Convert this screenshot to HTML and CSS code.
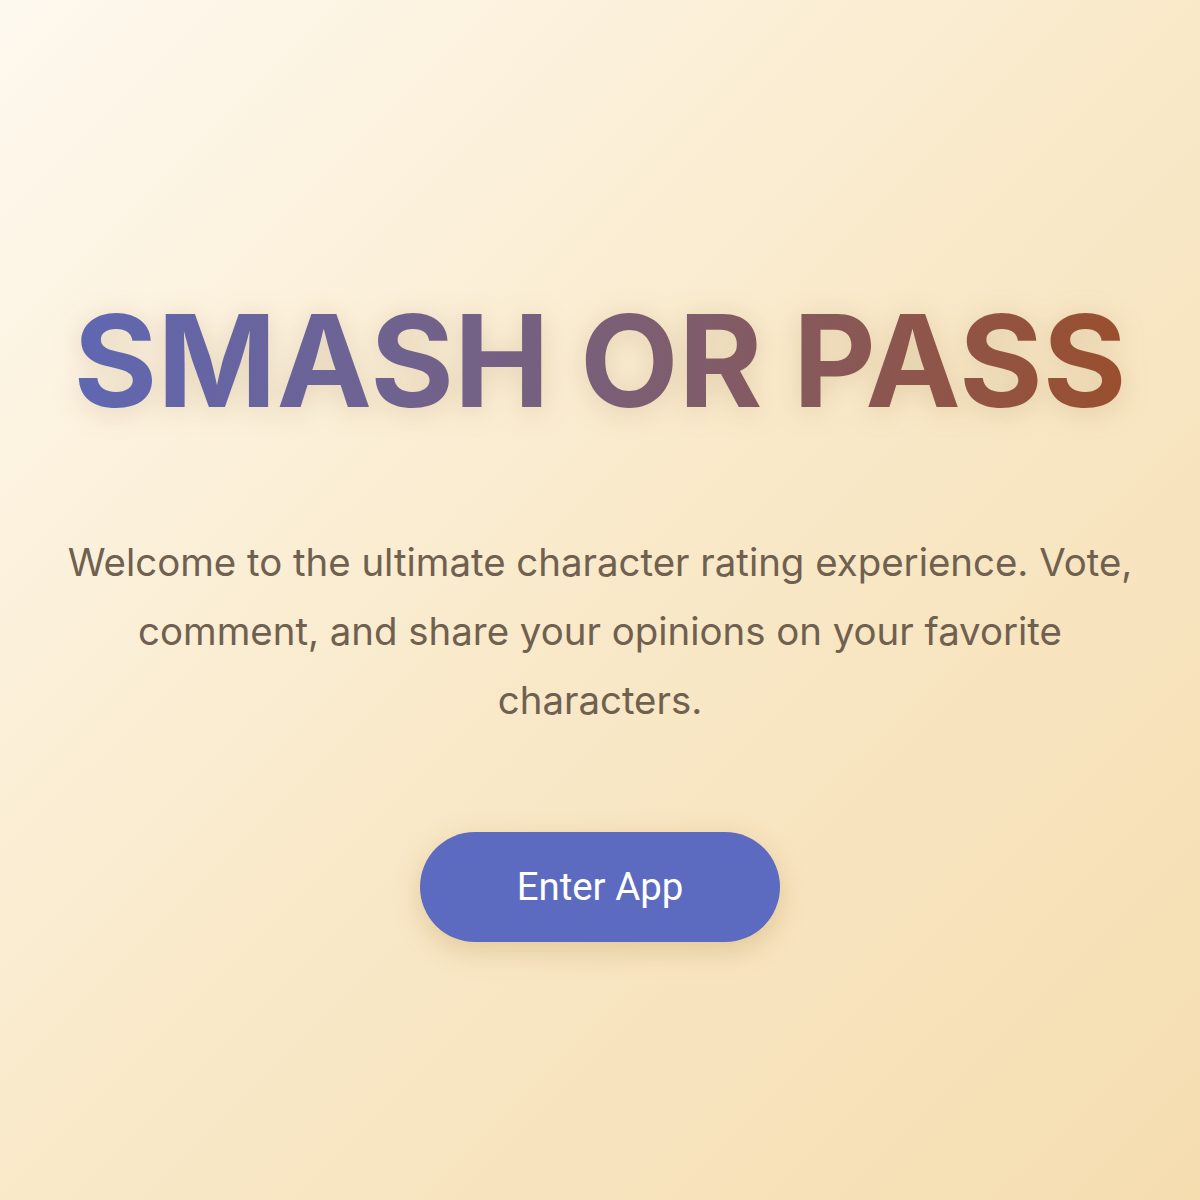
FILE: index.html
```html
<!DOCTYPE html>
<html lang="en">
<head>
    <meta charset="UTF-8">
    <meta name="viewport" content="width=device-width, initial-scale=1.0">
    <title>Smash or Pass</title>
    <link rel="stylesheet" href="styles.css">
</head>
<body>
    <div class="landing">
        <h1 class="title">SMASH OR PASS</h1>
        <p class="intro">Welcome to the ultimate character rating experience. Vote, comment, and share your opinions on your favorite characters.</p>
        <button type="button" class="enter-btn">Enter App</button>
    </div>
</body>
</html>
```

FILE: styles.css
```css
html, body {
    margin: 0;
    height: 100%;
}
body {
    font-family: Inter, "Noto Sans", sans-serif;
    background: linear-gradient(135deg, #fef9ef 0%, #f9e9c9 50%, #f5ddb0 100%);
}
.landing {
    min-height: 100vh;
    box-sizing: border-box;
    padding: 24px 60px 0;
    display: flex;
    flex-direction: column;
    align-items: center;
    justify-content: center;
    text-align: center;
}
.title {
    margin: 0;
    font-size: 128px;
    font-weight: 700;
    line-height: normal;
    background: linear-gradient(90deg, #5f67b2 0%, #7a5f78 50%, #9a4f2e 100%);
    -webkit-background-clip: text;
    background-clip: text;
    color: transparent;
    filter: drop-shadow(0 4px 14px rgba(120, 80, 30, 0.18));
}
.intro {
    margin: 90px 0 0;
    max-width: 1080px;
    font-size: 38.4px;
    line-height: 69px;
    color: #6f604f;
}
.enter-btn {
    margin-top: 97px;
    width: 360px;
    height: 110px;
    border: none;
    border-radius: 55px;
    background: #5c6bc0;
    color: #fff;
    font-family: Roboto, sans-serif;
    font-size: 38.4px;
    box-shadow: 0 8px 28px rgba(160, 110, 40, 0.25);
    cursor: pointer;
}
```
